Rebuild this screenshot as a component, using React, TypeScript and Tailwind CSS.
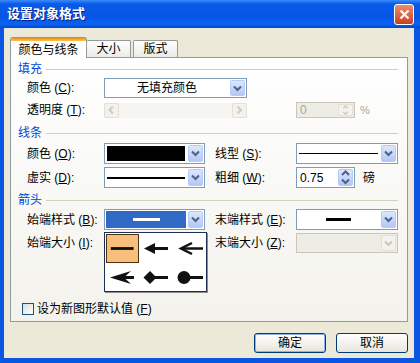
import type { ReactNode } from 'react'

const FONT = "font-['Liberation_Sans','Noto_Sans_CJK_SC',sans-serif]"

function Chevron({ dir = 'down', color = '#4D6185' }: { dir?: 'down' | 'left' | 'right' | 'up'; color?: string }) {
  const d = {
    down: 'M1 1.5 L4.5 5 L8 1.5',
    up: 'M1 5 L4.5 1.5 L8 5',
    left: 'M6 0.5 L2.5 4 L6 7.5',
    right: 'M2.5 0.5 L6 4 L2.5 7.5',
  }[dir]
  const box = dir === 'down' || dir === 'up' ? '0 0 9 7' : '0 0 9 8'
  return (
    <svg width="9" height={dir === 'down' || dir === 'up' ? 7 : 8} viewBox={box}>
      <path d={d} fill="none" stroke={color} strokeWidth="2" />
    </svg>
  )
}

function ArrowBtn({ disabled }: { disabled?: boolean }) {
  return disabled ? (
    <div className="m-px flex w-[15px] items-center justify-center rounded-[2px] border border-[#E2E0D4] bg-[#F3F2EC]">
      <Chevron color="#C9C7BA" />
    </div>
  ) : (
    <div className="m-px flex w-[15px] items-center justify-center rounded-[2px] border border-[#B7CAF3] bg-linear-to-b from-[#DDE7FE] to-[#B3C7F5]">
      <Chevron />
    </div>
  )
}

function Combo({ className, children, disabled }: { className: string; children?: ReactNode; disabled?: boolean }) {
  return (
    <div
      className={`flex h-full border ${disabled ? 'border-[#C9C7BA] bg-[#EEEDE5]' : 'border-[#7F9DB9] bg-white'} ${className}`}
    >
      <div className="flex flex-1 items-center justify-center p-[2px]">{children}</div>
      <ArrowBtn disabled={disabled} />
    </div>
  )
}

function Spin({ value, disabled }: { value: string; disabled?: boolean }) {
  return (
    <div
      className={`flex h-full w-[59px] border ${disabled ? 'border-[#C9C7BA] bg-[#EEEDE5] text-[#A7A69C]' : 'border-[#7F9DB9] bg-white text-black'}`}
    >
      <div className="flex flex-1 items-center pl-[3px] text-[12px]">{value}</div>
      {disabled ? (
        <div className="m-px flex w-[15px] flex-col items-center justify-center gap-[1px] rounded-[2px] border border-[#E2E0D4] bg-[#F3F2EC]">
          <Chevron dir="up" color="#C9C7BA" />
          <Chevron dir="down" color="#C9C7BA" />
        </div>
      ) : (
        <div className="m-px flex w-[15px] flex-col items-center justify-center gap-[1px] rounded-[2px] border border-[#B7CAF3] bg-linear-to-b from-[#DDE7FE] to-[#B3C7F5]">
          <Chevron dir="up" />
          <Chevron dir="down" />
        </div>
      )}
    </div>
  )
}

function Label({ text, k, className = 'w-[77px]' }: { text: string; k: string; className?: string }) {
  return (
    <div className={`shrink-0 text-[12px] leading-[14px] text-black ${className}`}>
      {text} (<u>{k}</u>):
    </div>
  )
}

function Section({ title }: { title: string }) {
  return (
    <div className="flex h-[14px] items-center pr-[9px] pl-[7px]">
      <span className="text-[12px] leading-[14px] text-[#0046D5]">{title}</span>
      <div className="ml-[4px] h-px flex-1 bg-[#D0D0BF]" />
    </div>
  )
}

function Line({ w, h }: { w: string; h: string }) {
  return <div className={`bg-black ${w} ${h}`} />
}

function ArrowCell({ kind }: { kind: number }) {
  return (
    <svg width="33" height="29" viewBox="0 0 33 29">
      {kind === 0 && <line x1="4" y1="14.5" x2="28" y2="14.5" stroke="#111" strokeWidth="3" />}
      {kind === 1 && (
        <>
          <line x1="14" y1="14.5" x2="29" y2="14.5" stroke="#111" strokeWidth="3" />
          <polygon points="5,14.5 16,9 16,20" fill="#111" />
        </>
      )}
      {kind === 2 && (
        <>
          <line x1="8" y1="14.5" x2="30" y2="14.5" stroke="#111" strokeWidth="2.5" />
          <polyline points="19,9 8,14.5 19,20" fill="none" stroke="#111" strokeWidth="2.5" />
        </>
      )}
      {kind === 3 && (
        <>
          <line x1="15" y1="14.5" x2="28" y2="14.5" stroke="#111" strokeWidth="3" />
          <polygon points="4,14.5 25,8 18,14.5 25,21" fill="#111" />
        </>
      )}
      {kind === 4 && (
        <>
          <line x1="11" y1="14.5" x2="29" y2="14.5" stroke="#111" strokeWidth="3" />
          <polygon points="11,8 17.5,14.5 11,21 4.5,14.5" fill="#111" />
        </>
      )}
      {kind === 5 && (
        <>
          <line x1="11" y1="14.5" x2="30" y2="14.5" stroke="#111" strokeWidth="3" />
          <circle cx="11" cy="14.5" r="6.5" fill="#111" />
        </>
      )}
    </svg>
  )
}

export default function App() {
  return (
    <div className={`flex h-[363px] w-[420px] flex-col bg-[#0B55E3] ${FONT}`}>
      {/* Title bar */}
      <div className="flex h-[28px] shrink-0 items-center justify-between bg-[linear-gradient(180deg,#3C8CFA_0%,#0A5AE8_14%,#0456E6_60%,#0A62F0_86%,#0048D0_100%)] pr-[6px] pl-[7px]">
        <span className="text-[13px] font-bold text-white [text-shadow:1px_1px_0_#0A1E8A]">设置对象格式</span>
        <div className="flex h-[21px] w-[20px] items-center justify-center rounded-[3px] border border-white bg-linear-to-b from-[#E98C6E] to-[#C9411D]">
          <svg width="11" height="11" viewBox="0 0 11 11">
            <path d="M1.5 1.5 L9.5 9.5 M9.5 1.5 L1.5 9.5" stroke="white" strokeWidth="2.2" />
          </svg>
        </div>
      </div>

      {/* Body */}
      <div className="mr-[6px] mb-[5px] ml-[4px] flex flex-1 flex-col bg-[#ECE9D8] px-[6px] pt-[9px]">
        {/* Tabs */}
        <div className="flex h-[20px] items-end">
          <div className="relative z-10 -mb-px flex h-[21px] w-[77px] flex-col rounded-t-[3px] border border-b-0 border-[#919B9C] bg-white">
            <div className="h-[3px] rounded-t-[2px] bg-linear-to-b from-[#E68B2C] to-[#FFC73C]" />
            <div className="flex flex-1 items-center justify-center text-[12px] leading-[14px] text-black">颜色与线条</div>
          </div>
          <div className="flex h-[17px] w-[44px] items-center justify-center rounded-t-[2px] border border-b-0 border-l-0 border-[#919B9C] bg-linear-to-b from-white to-[#ECEBE6] text-[12px] text-black">
            大小
          </div>
          <div className="ml-[2px] flex h-[17px] w-[45px] items-center justify-center rounded-t-[2px] border border-b-0 border-[#919B9C] bg-linear-to-b from-white to-[#ECEBE6] text-[12px] text-black">
            版式
          </div>
        </div>

        {/* Panel */}
        <div className="relative flex h-[265px] flex-col border border-[#919B9C] bg-linear-to-b from-white to-[#F3F2EC] pt-[4px]">
          <Section title="填充" />
          <div className="mt-[2px] flex h-[20px] items-center pl-[16px]">
            <Label text="颜色" k="C" />
            <Combo className="w-[143px]">
              <span className="text-[12px] text-black">无填充颜色</span>
            </Combo>
          </div>
          <div className="mt-[4px] flex h-[16px] items-center pl-[16px]">
            <Label text="透明度" k="T" />
            <div className="flex h-[15px] w-[143px] bg-[#F6F5F1]">
              <div className="flex w-[15px] items-center justify-center rounded-[2px] border border-[#E2E0D4] bg-[#F3F2EC]">
                <Chevron dir="left" color="#CFCDC2" />
              </div>
              <div className="flex-1" />
              <div className="flex w-[15px] items-center justify-center rounded-[2px] border border-[#E2E0D4] bg-[#F3F2EC]">
                <Chevron dir="right" color="#CFCDC2" />
              </div>
            </div>
            <div className="w-[49px]" />
            <Spin value="0" disabled />
            <span className="ml-[5px] text-[11px] text-[#A7A69C]">%</span>
          </div>

          <div className="mt-[8px]">
            <Section title="线条" />
          </div>
          <div className="mt-[3px] flex h-[21px] items-center pl-[16px]">
            <Label text="颜色" k="O" />
            <Combo className="w-[101px]">
              <div className="h-full w-full bg-black" />
            </Combo>
            <div className="w-[10px]" />
            <Label text="线型" k="S" className="w-[81px]" />
            <Combo className="w-[102px]">
              <Line w="w-full" h="h-px" />
            </Combo>
          </div>
          <div className="mt-[3px] flex h-[21px] items-center pl-[16px]">
            <Label text="虚实" k="D" />
            <Combo className="w-[101px]">
              <Line w="w-full" h="h-[2px]" />
            </Combo>
            <div className="w-[10px]" />
            <Label text="粗细" k="W" className="w-[81px]" />
            <Spin value="0.75" />
            <span className="ml-[8px] text-[12px] text-black">磅</span>
          </div>

          <div className="mt-[5px]">
            <Section title="箭头" />
          </div>
          <div className="mt-[2px] flex h-[21px] items-center pl-[16px]">
            <Label text="始端样式" k="B" />
            <div className="flex h-full w-[101px] border border-[#7F9DB9] bg-white">
              <div className="m-[1px] flex flex-1 items-center justify-center bg-[#316AC5]">
                <div className="h-[3px] w-[27px] bg-white" />
              </div>
              <ArrowBtn />
            </div>
            <div className="w-[10px]" />
            <Label text="末端样式" k="E" className="w-[81px]" />
            <Combo className="w-[102px]">
              <Line w="w-[25px]" h="h-[3px]" />
            </Combo>
          </div>
          <div className="mt-[3px] flex h-[20px] items-center pl-[16px]">
            <Label text="始端大小" k="I" />
            <div className="w-[101px]" />
            <div className="w-[10px]" />
            <Label text="末端大小" k="Z" className="w-[81px]" />
            <Combo className="w-[102px]" disabled />
          </div>

          <div className="mt-[49px] flex h-[13px] items-center pl-[11px]">
            <div className="h-[12px] w-[12px] border border-[#1C5180] bg-linear-to-br from-[#DCDCD7] to-white" />
            <span className="ml-[3px] text-[12px] leading-[14px] text-black">
              设为新图形默认值 (<u>F</u>)
            </span>
          </div>

          {/* Arrow style drop-down */}
          <div className="absolute top-[174px] left-[93px] grid h-[60px] w-[103px] grid-cols-3 border border-[#1C2F55] bg-white pt-px pl-px shadow-[1px_1px_0_#8C8C8C]">
            {[0, 1, 2, 3, 4, 5].map(k => (
              <div
                key={k}
                className={`flex h-[29px] items-center justify-center ${k === 0 ? 'border border-[#4B3214] bg-[#F8BE7C]' : ''}`}
              >
                <ArrowCell kind={k} />
              </div>
            ))}
          </div>
        </div>

        {/* Buttons */}
        <div className="mt-[11px] flex justify-end gap-[10px]">
          <button className="flex h-[20px] w-[72px] items-center justify-center rounded-[3px] border border-[#003C74] bg-linear-to-b from-white to-[#E6E4DB] text-[12px] text-black shadow-[inset_0_0_0_1px_#8DB2F0]">
            确定
          </button>
          <button className="flex h-[20px] w-[72px] items-center justify-center rounded-[3px] border border-[#003C74] bg-linear-to-b from-white to-[#E6E4DB] text-[12px] text-black">
            取消
          </button>
        </div>
      </div>
    </div>
  )
}
